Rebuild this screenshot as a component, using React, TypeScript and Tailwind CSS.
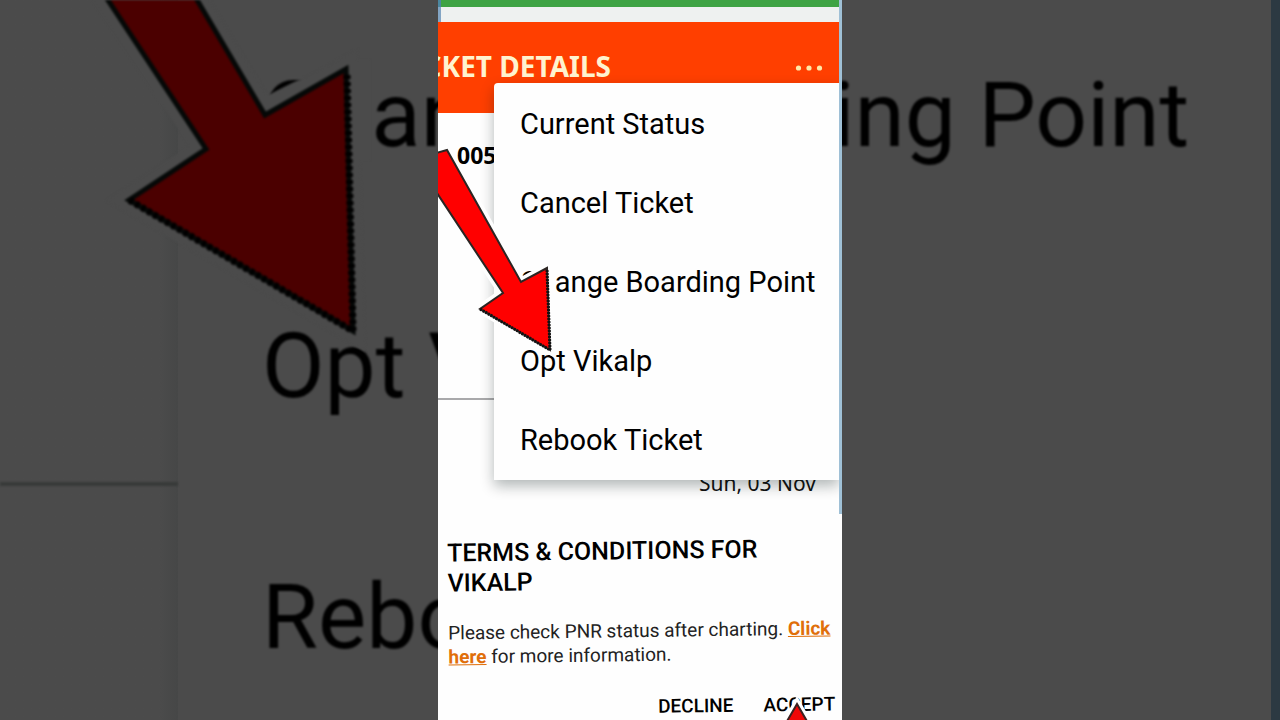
import React from "react";

const menuItems = [
  "Current Status",
  "Cancel Ticket",
  "Change Boarding Point",
  "Opt Vikalp",
  "Rebook Ticket",
];

function Backdrop() {
  return (
    <div
      aria-hidden="true"
      className="absolute inset-0 flex overflow-hidden bg-[#4b4b4b] font-[Roboto,sans-serif] text-black"
    >
      <div className="flex w-[178px] shrink-0 flex-col bg-linear-to-r from-[#4b4b4b] from-90% to-[#464747]">
        <div className="h-[486px] border-b-4 border-[#383a39] blur-[1px]" />
      </div>
      <div className="flex grow flex-col gap-[143px] pt-[61px] pl-[84px] text-[91px] leading-[108px] whitespace-nowrap blur-[1px]">
        <p>Change Boarding Point</p>
        <p>Opt Vikalp</p>
        <p>Rebook Ticket</p>
      </div>
      <div className="w-[9px] shrink-0 bg-[#2c3942]" />
      <svg className="absolute top-0 left-0 blur-[1px]" width="440" height="360" viewBox="0 0 440 360">
        <path d="M256 94 270 94 294 82 346 60 370 60V160H346L265 115Z" fill="#4b4b4b" />
        <path
          d="M100-10 206 149 129 200 353 331 346 69 265 115 190-10Z"
          fill="none"
          stroke="#4b4b4b"
          strokeWidth="24"
        />
        <path
          d="M100-12 206 149 129 200 353 331 346 69 265 115 190-12Z"
          fill="#4b0000"
          stroke="#050807"
          strokeWidth="5"
        />
        <path d="M347 75 353 331 129 200" fill="none" stroke="#000" strokeWidth="7" strokeDasharray="4 3" />
      </svg>
    </div>
  );
}

function TicketScreen() {
  return (
    <section className="relative h-[514px] shrink-0 overflow-hidden border-r-3 border-[#9fc0d6] bg-[#fefefe]">
      <div className="h-[7px] border-l-3 border-[#4b87a0] bg-[#3ea344]" />
      <div className="h-[15px] border-l-3 border-[#83a5c4] bg-[#eef1f0]" />
      <header className="flex h-[91px] items-center justify-between bg-[#ff3f00] pr-4">
        <div className="flex w-[173px] justify-end overflow-hidden pb-1">
          <h1 className="font-['Noto_Sans',sans-serif] text-[28px] leading-9 font-bold whitespace-nowrap text-[#fff3cf]">
            TICKET DETAILS
          </h1>
        </div>
        <button type="button" aria-label="More options" className="text-[#ffe9a8]">
          <svg width="28" height="8" viewBox="0 0 28 8" fill="currentColor">
            <circle cx="3.5" cy="4" r="2.6" />
            <circle cx="14" cy="4" r="2.6" />
            <circle cx="24.5" cy="4" r="2.6" />
          </svg>
        </button>
      </header>
      <div className="flex h-[287px] items-start border-b-2 border-[#a9a9ab] pt-[26px] pl-[19px]">
        <p className="font-['Noto_Sans',sans-serif] text-[23px] leading-8 font-bold text-black">005</p>
      </div>
      <p className="pt-[67px] pr-[23px] text-right font-['Noto_Sans',sans-serif] text-[21px] leading-8 text-[#111]">
        Sun, 03 Nov
      </p>
      <ul className="absolute top-[83px] right-0 left-[56px] rounded-tl-sm bg-[#fefefe] pt-[2px] shadow-[0_6px_14px_rgba(0,20,20,0.3)]">
        {menuItems.map((item) => (
          <li key={item}>
            <button
              type="button"
              className="flex h-[79px] w-full items-center pl-[26px] text-left text-[29px] whitespace-nowrap text-black"
            >
              {item}
            </button>
          </li>
        ))}
      </ul>
      <svg
        aria-hidden="true"
        className="absolute top-[130px] left-0"
        width="130"
        height="240"
        viewBox="438 130 130 240"
      >
        <path d="M524 282 540 266H554V298H547Z" fill="#fefefe" />
        <path
          d="M425 156 447 150 521 282 547 268 550 350 480 309 503 293 425 175Z"
          fill="none"
          stroke="#fefefe"
          strokeWidth="9"
        />
        <path
          d="M425 156 447 150 521 282 547 268 550 350 480 309 503 293 425 175Z"
          fill="#ff0000"
          stroke="#2b2523"
          strokeWidth="2"
        />
        <path d="M547 270 550 350 480 309" fill="none" stroke="#111" strokeWidth="3" strokeDasharray="2 1" />
      </svg>
    </section>
  );
}

function TermsDialog() {
  return (
    <section className="relative grow overflow-hidden bg-[#fefefe]">
      <div className="-rotate-[0.75deg] pt-[22px] pr-2 pl-[10px]">
        <h2 className="text-[25px] leading-[30px] font-medium text-black">
          TERMS &amp; CONDITIONS FOR
          <br />
          VIKALP
        </h2>
        <p className="pt-[23px] text-[19px] leading-[24px] whitespace-nowrap text-[#222]">
          Please check PNR status after charting.{" "}
          <a href="#vikalp" className="font-bold text-[#e06f0a] underline">
            Click
            <br />
            here
          </a>{" "}
          for more information.
        </p>
        <div className="flex justify-end gap-[30px] pt-[27px] text-[19px] leading-[26px] font-medium text-black">
          <button type="button">DECLINE</button>
          <button type="button">ACCEPT</button>
        </div>
      </div>
      <svg
        aria-hidden="true"
        className="absolute right-[26px] bottom-0"
        width="38"
        height="24"
        viewBox="0 0 38 24"
      >
        <path d="M19 8 5 32H33Z" fill="#ff0000" stroke="#fff" strokeWidth="8" />
        <path d="M19 8 5 32H33Z" fill="#f00808" stroke="#3a2222" strokeWidth="2" />
      </svg>
    </section>
  );
}

export default function App() {
  return (
    <div className="relative flex h-screen justify-center overflow-hidden bg-[#4b4b4b]">
      <Backdrop />
      <main className="relative flex w-full max-w-[404px] flex-col overflow-hidden bg-white font-[Roboto,sans-serif]">
        <TicketScreen />
        <TermsDialog />
      </main>
    </div>
  );
}
